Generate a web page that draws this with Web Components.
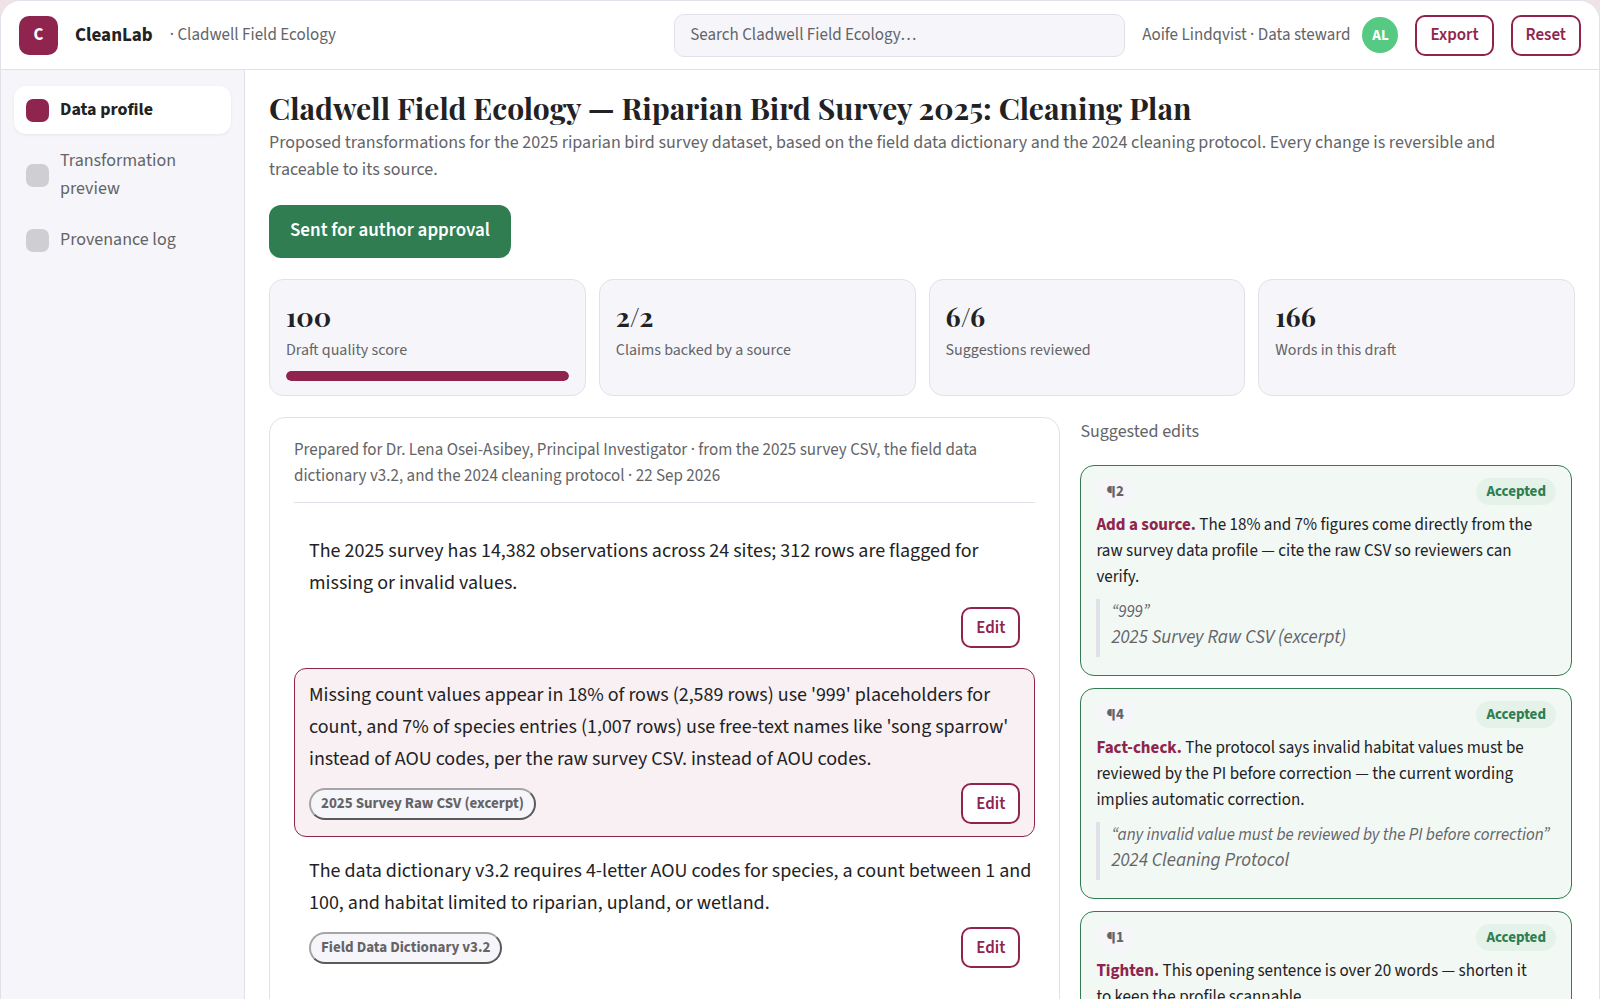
<!DOCTYPE html>
<html lang="en">
<head>
<meta charset="utf-8">
<meta name="viewport" content="width=device-width, initial-scale=1">
<title>CleanLab · Cladwell Field Ecology</title>
<style>
  :root {
    --accent: #8f254e;
    --accent-soft: #f8f0f3;
    --ok: #2f7d50;
    --ok-soft: #f2f8f4;
    --ok-pill: #e4f2e9;
    --ink: #222224;
    --muted: #646468;
    --line: #e2e1ea;
    --surface: #f6f6fa;
    --serif: "Playfair Display", "Liberation Serif", serif;
  }
  html { scrollbar-width: none; }
  body {
    margin: 0;
    background: #f0e3e8;
    color: var(--ink);
    font-family: "Source Sans 3", "Noto Sans CJK SC", sans-serif;
    font-size: 17px;
  }
</style>
</head>
<body>
<clean-app>
  <top-bar slot="top" brand="CleanLab" workspace="Cladwell Field Ecology" user="Aoife Lindqvist · Data steward" initials="AL"></top-bar>
  <nav-item slot="nav" current>Data profile</nav-item>
  <nav-item slot="nav">Transformation preview</nav-item>
  <nav-item slot="nav">Provenance log</nav-item>

  <plan-header>
    <span slot="title">Cladwell Field Ecology — Riparian Bird Survey 2025: Cleaning Plan</span>
    <span slot="summary">Proposed transformations for the 2025 riparian bird survey dataset, based on the field data dictionary and the 2024 cleaning protocol. Every change is reversible and traceable to its source.</span>
    <span slot="action">Sent for author approval</span>
  </plan-header>

  <stat-row>
    <stat-card value="100" meter="100">Draft quality score</stat-card>
    <stat-card value="2/2">Claims backed by a source</stat-card>
    <stat-card value="6/6">Suggestions reviewed</stat-card>
    <stat-card value="166">Words in this draft</stat-card>
  </stat-row>

  <review-layout>
    <draft-panel slot="draft">
      <span slot="meta">Prepared for Dr. Lena Osei-Asibey, Principal Investigator · from the 2025 survey CSV, the field data dictionary v3.2, and the 2024 cleaning protocol · 22 Sep 2026</span>
      <draft-paragraph>The 2025 survey has 14,382 observations across 24 sites; 312 rows are flagged for missing or invalid values.</draft-paragraph>
      <draft-paragraph selected source="2025 Survey Raw CSV (excerpt)">Missing count values appear in 18% of rows (2,589 rows) use '999' placeholders for count, and 7% of species entries (1,007 rows) use free-text names like 'song sparrow' instead of AOU codes, per the raw survey CSV. instead of AOU codes.</draft-paragraph>
      <draft-paragraph source="Field Data Dictionary v3.2">The data dictionary v3.2 requires 4-letter AOU codes for species, a count between 1 and 100, and habitat limited to riparian, upland, or wetland.</draft-paragraph>
    </draft-panel>
    <suggestion-list slot="side" heading="Suggested edits">
      <suggestion-card ref="¶2" status="Accepted" quote="“999”" source="2025 Survey Raw CSV (excerpt)"><b>Add a source.</b> The 18% and 7% figures come directly from the raw survey data profile — cite the raw CSV so reviewers can verify.</suggestion-card>
      <suggestion-card ref="¶4" status="Accepted" quote="“any invalid value must be reviewed by the PI before correction”" source="2024 Cleaning Protocol"><b>Fact-check.</b> The protocol says invalid habitat values must be reviewed by the PI before correction — the current wording implies automatic correction.</suggestion-card>
      <suggestion-card ref="¶1" status="Accepted"><b>Tighten.</b> This opening sentence is over 20 words — shorten it to keep the profile scannable.</suggestion-card>
    </suggestion-list>
  </review-layout>
</clean-app>

<script>
  const base = `*, *::before, *::after { box-sizing: border-box; } button, input { font: inherit; } p, h1, h2 { margin: 0; }`;

  // Registers an element whose shadow root is rendered from its attributes.
  function element(name, css, render) {
    customElements.define(name, class extends HTMLElement {
      connectedCallback() {
        if (this.shadowRoot) return;
        const template = document.createElement('template');
        template.innerHTML = `<style>${base}${css}</style>${render(this)}`;
        this.attachShadow({ mode: 'open' }).append(template.content.cloneNode(true));
      }
    });
  }
  const attr = (el, name) => el.getAttribute(name) || '';

  element('clean-app', `
    :host { display: grid; grid-template-columns: 244px minmax(0, 1fr); grid-template-rows: auto 1fr; min-height: 100vh; background: #fff; border: 1px solid var(--line); border-radius: 20px; overflow: hidden; }
    header { grid-column: 1 / -1; border-bottom: 1px solid var(--line); }
    nav { display: flex; flex-direction: column; gap: 3px; padding: 16px 13px; background: var(--surface); border-right: 1px solid var(--line); }
    main { padding: 18px 24px 24px; }
  `, () => `<header><slot name="top"></slot></header><nav aria-label="Sections"><slot name="nav"></slot></nav><main><slot></slot></main>`);

  element('outline-button', `
    :host { display: block; }
    button { display: block; height: 41px; padding: 0 13px; border: 2px solid var(--accent); border-radius: 10px; background: #fff; color: var(--accent); font-size: 17px; font-weight: 600; white-space: nowrap; cursor: pointer; }
  `, () => `<button type="button"><slot></slot></button>`);

  element('top-bar', `
    :host { display: flex; align-items: center; gap: 17px; height: 68px; padding: 0 18px; color: var(--muted); }
    .logo { display: grid; place-items: center; width: 39px; height: 39px; border-radius: 10px; background: var(--accent); color: #fff; font-weight: 700; }
    .brand { color: var(--ink); font-size: 19px; font-weight: 700; }
    input { width: 451px; height: 43px; margin-left: auto; padding: 0 15px; border: 1px solid var(--line); border-radius: 10px; background: var(--surface); color: var(--ink); }
    input::placeholder { color: var(--muted); opacity: 1; }
    .user { display: flex; align-items: center; gap: 12px; white-space: nowrap; }
    .avatar { display: grid; place-items: center; width: 36px; height: 36px; border-radius: 50%; background: #56c982; color: #fff; font-size: 15px; font-weight: 700; }
  `, el => `
    <span class="logo" aria-hidden="true">C</span>
    <span class="brand">${attr(el, 'brand')}</span>
    <span>· ${attr(el, 'workspace')}</span>
    <input type="search" aria-label="Search ${attr(el, 'workspace')}" placeholder="Search ${attr(el, 'workspace')}…">
    <span class="user"><span>${attr(el, 'user')}</span><span class="avatar">${attr(el, 'initials')}</span></span>
    <outline-button>Export</outline-button>
    <outline-button>Reset</outline-button>`);

  element('nav-item', `
    :host { display: block; }
    a { display: flex; align-items: center; gap: 11px; padding: 10px 12px; border-radius: 12px; color: var(--muted); font-size: 18px; line-height: 28px; text-decoration: none; }
    i { flex: none; width: 23px; height: 23px; border-radius: 7px; background: #cfced3; }
    :host([current]) a { background: #fff; color: var(--ink); font-weight: 700; box-shadow: 0 1px 3px rgb(40 30 60 / .08); }
    :host([current]) i { background: var(--accent); }
  `, el => `<a href="#"${el.hasAttribute('current') ? ' aria-current="page"' : ''}><i></i><span><slot></slot></span></a>`);

  element('plan-header', `
    :host { display: block; }
    h1 { font: 700 30px/41px var(--serif); }
    p { max-width: 1290px; color: var(--muted); font-size: 18px; line-height: 27px; }
    button { display: block; height: 53px; margin: 22px 0 21px; padding: 0 21px 3px; border: 0; border-radius: 12px; background: var(--ok); color: #fff; font-size: 19px; font-weight: 600; }
  `, () => `<h1><slot name="title"></slot></h1><p><slot name="summary"></slot></p><button type="button"><slot name="action"></slot></button>`);

  element('stat-row', `
    :host { display: grid; grid-template-columns: repeat(4, minmax(0, 1fr)); gap: 13px; margin-bottom: 21px; }
  `, () => `<slot></slot>`);

  element('stat-card', `
    :host { display: block; padding: 16px 16px 14px; border: 1px solid var(--line); border-radius: 14px; background: var(--surface); }
    .value { font: 700 27px/40px var(--serif); }
    .label { color: var(--muted); font-size: 16px; line-height: 28px; }
    .meter { height: 10px; margin-top: 7px; border-radius: 5px; background: var(--line); overflow: hidden; }
    .fill { height: 100%; border-radius: 5px; background: var(--accent); }
  `, el => `
    <div class="value">${attr(el, 'value')}</div>
    <div class="label"><slot></slot></div>
    ${el.hasAttribute('meter') ? `<div class="meter"><div class="fill" style="width: ${attr(el, 'meter')}%"></div></div>` : ''}`);

  element('review-layout', `
    :host { display: grid; grid-template-columns: minmax(0, 8fr) minmax(0, 5fr); gap: 20px; align-items: start; }
  `, () => `<slot name="draft"></slot><slot name="side"></slot>`);

  element('draft-panel', `
    :host { display: block; padding: 19px 24px 64px; border: 1px solid var(--line); border-radius: 16px; background: #fff; }
    .meta { margin-bottom: 21px; padding-bottom: 13px; border-bottom: 1px solid var(--line); color: var(--muted); line-height: 26px; }
    .body { display: flex; flex-direction: column; gap: 7px; }
  `, () => `<p class="meta"><slot name="meta"></slot></p><div class="body"><slot></slot></div>`);

  element('draft-paragraph', `
    :host { display: block; padding: 10px 0 12px 14px; border: 1px solid transparent; border-radius: 12px; }
    :host([selected]) { border-color: var(--accent); background: var(--accent-soft); }
    p { font-size: 20px; line-height: 32px; }
    .tools { display: flex; align-items: center; justify-content: space-between; margin-top: 8px; padding-right: 14px; }
    outline-button { margin-left: auto; }
    .chip { height: 32px; padding: 0 10px; border: 2px solid; border-color: #a5a5a7 #5a5a5c #5a5a5c #a5a5a7; border-radius: 16px; background: var(--surface); color: var(--muted); font-size: 15px; font-weight: 700; }
  `, el => `
    <p><slot></slot></p>
    <div class="tools">
      ${el.hasAttribute('source') ? `<button class="chip" type="button">${attr(el, 'source')}</button>` : ''}
      <outline-button>Edit</outline-button>
    </div>`);

  element('suggestion-list', `
    :host { display: flex; flex-direction: column; gap: 12px; padding-right: 3px; }
    h2 { margin-bottom: 6px; color: var(--muted); font-size: 18px; font-weight: 400; line-height: 30px; }
  `, el => `<h2>${attr(el, 'heading')}</h2><slot></slot>`);

  element('suggestion-card', `
    :host { display: block; padding: 12px 15px 18px; border: 1px solid var(--ok); border-radius: 14px; background: var(--ok-soft); }
    .top { display: flex; justify-content: space-between; margin-bottom: 7px; font-size: 15px; font-weight: 700; line-height: 27px; }
    .ref { padding: 0 10px; border-radius: 14px; background: var(--surface); color: var(--muted); }
    .status { padding: 0 10px; border-radius: 14px; background: var(--ok-pill); color: var(--ok); }
    p { padding-right: 14px; line-height: 26px; }
    ::slotted(b) { color: var(--accent); font-weight: 700; }
    blockquote { margin: 9px 0 0; padding: 0 0 6px 11px; border-left: 4px solid var(--line); color: var(--muted); font-size: 17px; font-style: italic; line-height: 26px; }
    cite { display: block; font-size: 19px; }
  `, el => `
    <div class="top"><span class="ref">${attr(el, 'ref')}</span><span class="status">${attr(el, 'status')}</span></div>
    <p><slot></slot></p>
    ${el.hasAttribute('quote') ? `<blockquote>${attr(el, 'quote')}<cite>${attr(el, 'source')}</cite></blockquote>` : ''}`);
</script>
</body>
</html>
